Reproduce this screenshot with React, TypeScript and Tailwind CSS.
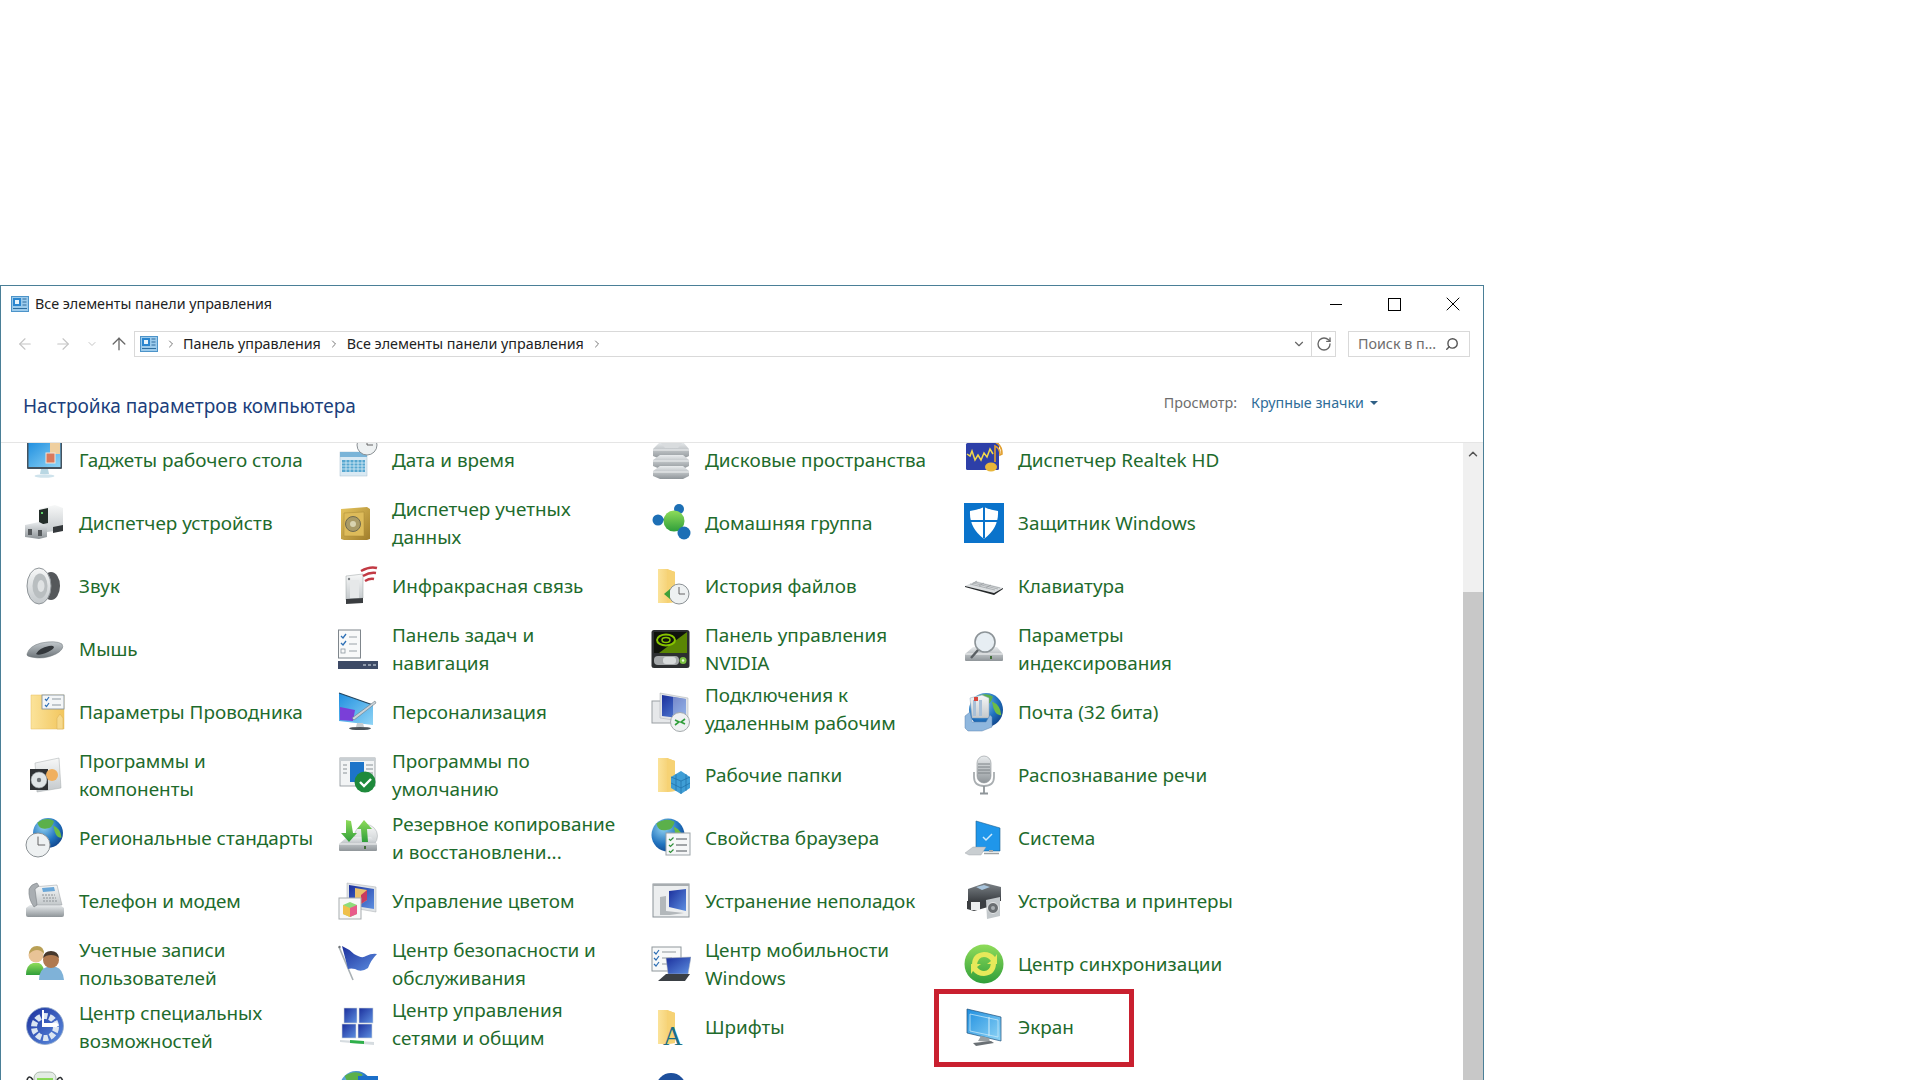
import type { ReactNode } from 'react';
import { ArrowLeft, ArrowRight, ArrowUp, ChevronDown, ChevronRight, ChevronUp, RotateCw, Search, X } from 'lucide-react';

// shared gradients for the control panel icons
function IconDefs() {
  const lin = (id: string, a: string, b: string, x2 = 0, y2 = 1) => (
    <linearGradient id={id} x1="0" y1="0" x2={x2} y2={y2}>
      <stop offset="0" stopColor={a} />
      <stop offset="1" stopColor={b} />
    </linearGradient>
  );
  return (
    <svg className="absolute w-0 h-0">
      <defs>
        {lin('sky', '#1f8fe0', '#8fd4f5', 1, 1)}
        {lin('steel', '#e9ecee', '#8f9599')}
        {lin('light', '#f7f8f8', '#c3c8cb')}
        {lin('folder', '#fbe39a', '#f2c65e', 1, 0)}
        {lin('navy', '#1b2f9c', '#5d8fe0', 1, 1)}
        {lin('green', '#8fdc5a', '#2f9e3a')}
        {lin('gold', '#e6c55e', '#a07d2b', 1, 1)}
        {lin('dark', '#7c8287', '#34383c')}
        {lin('mouse', '#c3c9cd', '#6d7479')}
        <radialGradient id="globe" cx="0.35" cy="0.3" r="0.8">
          <stop offset="0" stopColor="#8fd0f0" />
          <stop offset="0.6" stopColor="#2173bf" />
          <stop offset="1" stopColor="#0f3f86" />
        </radialGradient>
      </defs>
    </svg>
  );
}

function Ico({ children }: { children: ReactNode }) {
  return (
    <svg viewBox="0 0 40 40" className="w-10 h-10 shrink-0">
      {children}
    </svg>
  );
}

const Globe = ({ cx, cy, r }: { cx: number; cy: number; r: number }) => (
  <g>
    <circle cx={cx} cy={cy} r={r} fill="url(#globe)" />
    <path d={`M${cx - r * 0.7} ${cy - r * 0.7}q${r * 0.6} ${-r * 0.4} ${r * 1.1} ${-r * 0.1}q${-r * 0.1} ${r * 0.5} ${-r * 0.5} ${r * 0.5}q${-r * 0.5} ${r * 0.1} ${-r * 0.6} ${-r * 0.4}z`} fill="#5bb04a" />
    <path d={`M${cx + r * 0.35} ${cy - r * 0.5}q${r * 0.5} ${r * 0.2} ${r * 0.55} ${r * 0.8}q${-r * 0.4} ${r * 0.1} ${-r * 0.55} ${-r * 0.8}z`} fill="#6cbc46" />
  </g>
);

const Clock = ({ cx, cy, r }: { cx: number; cy: number; r: number }) => (
  <g>
    <circle cx={cx} cy={cy} r={r} fill="#eef1f2" stroke="#8b9195" strokeWidth="1" />
    <path d={`M${cx} ${cy - r * 0.7}V${cy}H${cx + r * 0.6}`} fill="none" stroke="#555" strokeWidth="0.9" />
  </g>
);

const Folder = () => (
  <g>
    <path d="M7 3h9l8 3v30l-8 1H7z" fill="url(#folder)" />
    <path d="M16 3l8 3v30l-8 1z" fill="#f6d274" />
  </g>
);

const Drive = ({ y = 22 }: { y?: number }) => (
  <g>
    <path d={`M1 ${y + 6}l8-7h24l6 7v6q0 1-1 1H2q-1 0-1-1z`} fill="url(#steel)" />
    <path d={`M1 ${y + 6}h38`} stroke="#f4f5f5" strokeWidth="1" />
    <rect x="26" y={y + 8} width="2" height="3" fill="#3f6d36" />
  </g>
);

const icons: Record<string, ReactNode> = {
  gadgets: (
    <Ico>
      <rect x="2" y="1" width="35" height="28" rx="1" fill="#44525e" />
      <rect x="3.5" y="2" width="32" height="25" fill="url(#sky)" />
      <rect x="25" y="3" width="10" height="11" fill="#efcf9f" />
      <rect x="21" y="13" width="9" height="10" fill="#d9795c" stroke="#f3e6da" />
      <path d="M16 29h7l1 5h-9z" fill="#b9d7e3" />
      <ellipse cx="19.5" cy="36" rx="10" ry="1.8" fill="#cfe3ec" />
    </Ico>
  ),
  devmgr: (
    <Ico>
      <path d="M14 6l16-4 8 3v22l-24 3z" fill="url(#light)" />
      <path d="M14 7l9-2v15l-9 2z" fill="#242e2a" />
      <rect x="16" y="9" width="2" height="2" fill="#5fd06a" />
      <path d="M28 24l10-2v6l-10 2z" fill="#34383b" />
      <path d="M0 22l14-3 8 4v11l-8 2-14-2z" fill="url(#steel)" />
      <rect x="3" y="26" width="4" height="6" fill="#55595c" />
      <rect x="13" y="27" width="4" height="6" fill="#55595c" />
    </Ico>
  ),
  sound: (
    <Ico>
      <ellipse cx="26" cy="20" rx="9" ry="14" fill="#55585b" />
      <ellipse cx="14" cy="20" rx="12" ry="18" fill="url(#light)" stroke="#8f9599" />
      <ellipse cx="15" cy="20" rx="7.5" ry="12.5" fill="#b9bec0" />
      <ellipse cx="16" cy="20" rx="3.5" ry="6" fill="#dfe2e3" />
    </Ico>
  ),
  mouse: (
    <Ico>
      <path d="M2 25q2-8 14-11 15-3 21 1 3 5-6 10-12 6-25 3-5-1-4-3z" fill="url(#mouse)" stroke="#6d7479" strokeWidth="0.5" />
      <path d="M11 25q3-6 13-8 4-1 5 1 0 2-6 5-9 4-12 2z" fill="#33373b" />
    </Ico>
  ),
  explorer: (
    <Ico>
      <path d="M6 3h33v34H6z" fill="url(#folder)" stroke="#e4bd62" strokeWidth="0.5" />
      <path d="M32 26v11h6V26l-3-4z" fill="#f6d98c" stroke="#d6ac55" strokeWidth="0.5" />
      <rect x="17" y="3" width="22" height="14" fill="#f4f6f7" stroke="#7a8a96" strokeWidth="0.8" />
      <path d="M20 7l1.5 1.5L24 5M20 13l1.5 1.5L24 11" fill="none" stroke="#2d6fb5" strokeWidth="1.2" />
      <path d="M27 7h9M27 13h9" stroke="#8d98a0" />
    </Ico>
  ),
  programs: (
    <Ico>
      <path d="M10 8l24-5 2 30-24 4z" fill="url(#light)" stroke="#a5aaad" strokeWidth="0.5" />
      <rect x="5" y="14" width="18" height="21" fill="#2e3134" />
      <circle cx="27" cy="20" r="6" fill="#f0b060" />
      <circle cx="14" cy="25" r="8" fill="#dfe4e6" stroke="#8f9599" strokeWidth="0.6" />
      <circle cx="14" cy="25" r="2.2" fill="#707579" />
    </Ico>
  ),
  regional: (
    <Ico>
      <Globe cx={23} cy={15} r={15} />
      <Clock cx={13} cy={27} r={12} />
    </Ico>
  ),
  phone: (
    <Ico>
      <path d="M1 27l4-3h30l4 3v7q0 2-2 2H3q-2 0-2-2z" fill="url(#steel)" />
      <path d="M8 6l24-2 5 20H10z" fill="url(#light)" stroke="#969b9f" strokeWidth="0.5" />
      <path d="M4 8q2-5 8-6l2 3-4 3 2 16-3 2q-6-8-5-18z" fill="#a9aeb2" stroke="#6f7478" strokeWidth="0.5" />
      <path d="M17 7l12-1 1 4-12 1z" fill="#6aa7d8" />
      <path d="M17 14h13M18 17h13M18 20h14" stroke="#8c9195" strokeWidth="1.2" strokeDasharray="2 1" />
    </Ico>
  ),
  users: (
    <Ico>
      <path d="M1 31q0-10 7-12h6q5 2 6 12z" fill="url(#green)" />
      <circle cx="11" cy="11" r="7.5" fill="#e8c396" />
      <path d="M4 10q1-8 8-8t7 8q-3-4-7-4t-8 4z" fill="#b9a056" />
      <path d="M14 36q0-11 8-13h9q7 2 8 13z" fill="#7fb2d8" />
      <circle cx="26" cy="16" r="8" fill="#b07a50" />
      <path d="M18 14q1-7 8-7t8 7q-3-3-8-3t-8 3z" fill="#47392d" />
    </Ico>
  ),
  access: (
    <Ico>
      <circle cx="20" cy="19" r="18.5" fill="url(#navy)" stroke="#8fa7c8" strokeWidth="0.8" />
      <circle cx="20" cy="20" r="11" fill="none" stroke="#dce6f2" strokeWidth="6" strokeDasharray="5 2" />
      <path d="M19 3v13h12l-3-3 6 5-6 5 3-3H17V3z" fill="#fff" />
    </Ico>
  ),
  power: (
    <Ico>
      <path d="M2 10q2-6 6 0M32 10q4-6 6 2" fill="none" stroke="#2c2f31" strokeWidth="1.6" />
      <rect x="9" y="2" width="22" height="24" rx="6" fill="#e3ebe4" stroke="#8fa090" strokeWidth="0.7" />
      <rect x="12" y="8" width="16" height="18" fill="url(#green)" />
    </Ico>
  ),
  datetime: (
    <Ico>
      <rect x="2" y="12" width="27" height="24" fill="#d9e9f3" stroke="#a9c0cf" strokeWidth="0.5" />
      <rect x="2" y="12" width="27" height="5" fill="#7ab4d8" />
      <path d="M4 20h23v12H4z" fill="#57a7d0" />
      <path d="M8 20v12M12 20v12M16 20v12M20 20v12M24 20v12M4 23h23M4 26h23M4 29h23" stroke="#dbeef7" strokeWidth="0.8" />
      <Clock cx={29} cy={5} r={10} />
    </Ico>
  ),
  cred: (
    <Ico>
      <path d="M3 6l26-2 3 2v30l-3 1H6l-3-1z" fill="url(#gold)" />
      <path d="M6 10l20-1v24H6z" fill="#ddbb5a" stroke="#a88a36" strokeWidth="0.5" />
      <circle cx="15" cy="21" r="7.5" fill="#a89a66" stroke="#6f6a4e" />
      <circle cx="15" cy="21" r="3" fill="#d8d3b0" />
    </Ico>
  ),
  infrared: (
    <Ico>
      <path d="M8 10l17-2v24l-17 2z" fill="url(#light)" stroke="#9ba0a3" strokeWidth="0.5" />
      <rect x="12" y="14" width="9" height="18" fill="#e6e8e9" />
      <circle cx="11" cy="13" r="1.2" fill="#7a7f83" />
      <path d="M8 33l17-1v5l-17 1z" fill="#3a3d40" />
      <path d="M23 5q9-5 16-3M25 10q7-4 13-3M27 15q5-3 9-2" fill="none" stroke="#c23a44" strokeWidth="2.4" />
    </Ico>
  ),
  taskbar: (
    <Ico>
      <rect x="0.5" y="1" width="22" height="28" fill="#f8f9f9" stroke="#7f868c" />
      <path d="M3 7l2 2 3-4M3 14l2 2 3-4" fill="none" stroke="#2d6fb5" strokeWidth="1.3" />
      <rect x="3" y="20" width="4" height="4" fill="none" stroke="#8d98a0" strokeWidth="0.8" />
      <path d="M11 8h8M11 15h8M11 22h8" stroke="#9aa2a8" />
      <rect x="0" y="32" width="40" height="8" fill="#3d4a66" />
      <path d="M25 36h3M30 36h3M35 36h3" stroke="#8f9aab" strokeWidth="2" />
    </Ico>
  ),
  personal: (
    <Ico>
      <path d="M1 1l34 12v20l-34-4z" fill="url(#sky)" />
      <path d="M1 1l34 12" stroke="#22455f" strokeWidth="1.2" />
      <path d="M2 15l15 3-2 11-13-1z" fill="#7a3fd8" />
      <path d="M14 26l23-17 1 2-22 17z" fill="#c9d2d8" stroke="#5f6c76" strokeWidth="0.5" />
      <path d="M19 31h6l1 4h-8z" fill="#c5ccd0" />
      <ellipse cx="22" cy="36.5" rx="11" ry="1.6" fill="#4a5258" />
    </Ico>
  ),
  defaults: (
    <Ico>
      <rect x="2" y="3" width="35" height="28" fill="#f2f4f5" stroke="#8a9297" strokeWidth="0.8" />
      <rect x="2" y="3" width="35" height="3" fill="#c9cfd3" />
      <rect x="12" y="7" width="14" height="20" fill="#1d74c9" />
      <path d="M5 10h4M5 14h4M5 18h4M28 10h7M28 14h7M28 18h7" stroke="#8a9297" />
      <circle cx="27" cy="27" r="10.5" fill="#1f8a3c" />
      <path d="M22 27l4 4 7-7" fill="none" stroke="#fff" strokeWidth="2.4" />
    </Ico>
  ),
  backup: (
    <Ico>
      <circle cx="28" cy="18" r="11.5" fill="url(#light)" stroke="#a5aaad" strokeWidth="0.5" />
      <Drive y={20} />
      <path d="M8 2l5 1 2 12h4l-8 9-8-9h5z" fill="url(#green)" />
      <path d="M24 24l-1-13h-4l7-9 8 9h-5l1 13z" fill="url(#green)" />
    </Ico>
  ),
  color: (
    <Ico>
      <path d="M9 2l29 4v25L9 26z" fill="#dfe3e6" stroke="#a8adb0" strokeWidth="0.5" />
      <path d="M11 4l25 4v20L11 24z" fill="url(#navy)" />
      <path d="M17 7l12 2v10l-6 4-6-6z" fill="#e9c06a" />
      <path d="M29 9v10l-6 4v-9z" fill="#c93b5f" />
      <rect x="1" y="17" width="22" height="21" fill="#f8f8f8" stroke="#a8adb0" />
      <path d="M5 24l7-3 7 3v9l-7 3-7-3z" fill="#8fdc7a" />
      <path d="M5 24l7 3v9l-7-3z" fill="#f0c04a" />
      <path d="M19 24l-7 3v9l7-3z" fill="#e85a8a" />
    </Ico>
  ),
  security: (
    <Ico>
      <path d="M1 3l14 33" stroke="#a9b0b4" strokeWidth="1.6" />
      <circle cx="1.5" cy="3" r="1.2" fill="#707579" />
      <path d="M4 2q7 3 12 8 8 5 12 2 6-3 11-2-6 6-9 14-7 5-13 1-4-1-7 0z" fill="url(#navy)" />
    </Ico>
  ),
  network: (
    <Ico>
      <rect x="6" y="1" width="13" height="15" fill="url(#navy)" stroke="#d0d6db" strokeWidth="0.6" />
      <rect x="21" y="1" width="14" height="15" fill="url(#navy)" stroke="#d0d6db" strokeWidth="0.6" />
      <rect x="4" y="17" width="14" height="14" fill="url(#navy)" stroke="#d0d6db" strokeWidth="0.6" />
      <rect x="20" y="17" width="14" height="14" fill="url(#navy)" stroke="#d0d6db" strokeWidth="0.6" />
      <path d="M2 33l34 2v3L2 35z" fill="#d6dce0" />
      <path d="M12 33l14 1v3l-14-1z" fill="#2fb04a" />
    </Ico>
  ),
  language: (
    <Ico>
      <Globe cx={18} cy={17} r={16} />
      <rect x="20" y="6" width="20" height="20" fill="#1c6fc9" />
    </Ico>
  ),
  storage: (
    <Ico>
      <path d="M2 9l7-7h23l6 7v7l-6 3H9l-7-3z" fill="url(#steel)" />
      <path d="M2 20l7-5h23l6 5v6l-6 3H9l-7-3z" fill="url(#steel)" />
      <path d="M2 31l7-5h23l6 5v5l-6 3H9l-7-3z" fill="url(#steel)" />
      <path d="M2 10h36M2 21h36M2 32h36" stroke="#f1f3f4" />
      <path d="M9 2h23l-5 6H14z" fill="#d9dcde" />
    </Ico>
  ),
  homegroup: (
    <Ico>
      <circle cx="7" cy="17" r="5.5" fill="#1d6fb5" />
      <circle cx="28" cy="6" r="5" fill="#1d6fb5" />
      <path d="M11 17l12-3" stroke="#1d6fb5" strokeWidth="2" />
      <circle cx="23" cy="18" r="10.5" fill="url(#green)" />
      <circle cx="33" cy="30" r="6.5" fill="#1d6fb5" />
    </Ico>
  ),
  history: (
    <Ico>
      <Folder />
      <path d="M24 24l-8 6 8 5z" fill="#3f9e38" />
      <Clock cx={28} cy={28} r={10} />
      <path d="M13 28l6-5v10z" fill="#3fa03a" />
    </Ico>
  ),
  nvidia: (
    <Ico>
      <rect x="0.5" y="1" width="38" height="38" rx="2.5" fill="#2d2f31" />
      <rect x="3" y="3" width="33" height="21" fill="#0f120c" />
      <path d="M36 3v21H8z" fill="#7ab800" opacity="0.7" />
      <ellipse cx="15" cy="11" rx="9" ry="5.5" fill="none" stroke="#86c400" strokeWidth="2" />
      <ellipse cx="15" cy="11" rx="4" ry="2.5" fill="none" stroke="#86c400" strokeWidth="1.5" />
      <rect x="3" y="27" width="25" height="9" rx="4" fill="#a5a8aa" />
      <rect x="12" y="28" width="13" height="7" rx="3" fill="#d8dbdc" />
      <circle cx="32" cy="31.5" r="3.5" fill="#7dc242" />
      <circle cx="32" cy="31.5" r="1.2" fill="#e8f7d8" />
    </Ico>
  ),
  rdp: (
    <Ico>
      <rect x="1" y="9" width="20" height="22" fill="#e6e8ea" stroke="#9a9fa3" />
      <path d="M9 1l28 5v24L9 26z" fill="#e2e5e7" stroke="#a8adb0" strokeWidth="0.5" />
      <path d="M11 3l24 4v20L11 24z" fill="url(#navy)" />
      <path d="M22 5l13 2v20l-13-3z" fill="#fff" opacity="0.35" />
      <circle cx="29" cy="30" r="9.5" fill="#eef1f2" stroke="#a5aaad" />
      <path d="M24 33l4-3-4-2M34 27l-4 3 4 2" fill="none" stroke="#2f9e3a" strokeWidth="1.6" />
    </Ico>
  ),
  work: (
    <Ico>
      <Folder />
      <path d="M20 22l10-6 9 6v11l-9 6-10-6z" fill="#3f9ed6" />
      <path d="M30 26v13M20 22l10 4 9-4M20 28l10 5 9-5M25 19v17M35 19v17" fill="none" stroke="#1c6fa8" strokeWidth="0.7" />
    </Ico>
  ),
  browser: (
    <Ico>
      <Globe cx={17} cy={17} r={16.5} />
      <rect x="15" y="15" width="24" height="22" fill="#f6f7f8" stroke="#9ca3a8" />
      <path d="M18 21l1.5 1.5 3-3M18 27l1.5 1.5 3-3M18 33l1.5 1.5 3-3" fill="none" stroke="#2f8f3a" strokeWidth="1.2" />
      <path d="M25 21h11M25 27h11M25 33h11" stroke="#4d5358" />
    </Ico>
  ),
  trouble: (
    <Ico>
      <rect x="2" y="3" width="36" height="33" fill="#eceeef" stroke="#8a9297" />
      <rect x="2" y="3" width="36" height="2" fill="#a8adb0" />
      <path d="M18 10l17-2v22l-17-4z" fill="url(#navy)" />
      <path d="M9 16l6-1v15l18 2-14 2H9z" fill="#b3b8bb" />
    </Ico>
  ),
  mobility: (
    <Ico>
      <rect x="1" y="3" width="29" height="24" fill="#f8f9f9" stroke="#8f979c" />
      <path d="M3 8l2 2 3-4M3 14l2 2 3-4M3 20l2 2 3-4" fill="none" stroke="#2d6fb5" strokeWidth="1.2" />
      <path d="M11 8h14M11 14h10M11 20h8" stroke="#8f979c" />
      <path d="M15 14l25-1-3 17H17z" fill="url(#navy)" stroke="#b0b6ba" strokeWidth="0.5" />
      <path d="M7 37l8-7h24l-5 7z" fill="#3a3f44" />
    </Ico>
  ),
  fonts: (
    <Ico>
      <Folder />
      <text x="12" y="38" fontFamily="Liberation Serif, serif" fontSize="27" fill="#1c6f86">A</text>
    </Ico>
  ),
  round: (
    <Ico>
      <circle cx="20" cy="18" r="15" fill="#1d4f9c" />
    </Ico>
  ),
  realtek: (
    <Ico>
      <rect x="2" y="3" width="33" height="27" rx="1.5" fill="#2d3fa8" />
      <path d="M3 14l3 2 2-5 3 9 3-5 3 5 3-7 3 4 3-8 3 5" fill="none" stroke="#f2d84a" strokeWidth="1.5" />
      <path d="M31 2q7 3 7 12l-2 1q0-7-5-9v16" fill="none" stroke="#e2a030" strokeWidth="1.6" />
      <ellipse cx="27" cy="27" rx="6" ry="4.5" fill="#e8b63a" />
    </Ico>
  ),
  defender: (
    <Ico>
      <rect width="40" height="40" fill="#0a73cb" />
      <path d="M6 8q8-1 14-4 6 3 14 4 1 17-14 28Q5 25 6 8z" fill="#fff" />
      <path d="M19 4h2v31l-1 1-1-1zM6 17h28v2H6z" fill="#0a73cb" />
    </Ico>
  ),
  keyboard: (
    <Ico>
      <path d="M1 20l11-5 27 7-9 5z" fill="#dcdfe1" />
      <path d="M1 20l29 7 9-5v1l-9 6L1 21z" fill="#25282a" />
      <path d="M11 16l25 6M9 17l25 6M6 18l25 6M13 15l-5 3M20 17l-5 3M27 19l-5 3" stroke="#8d9295" strokeWidth="0.6" />
    </Ico>
  ),
  indexing: (
    <Ico>
      <Drive y={19} />
      <circle cx="21" cy="13" r="10" fill="#e7eef3" stroke="#8d9498" strokeWidth="1.6" />
      <path d="M14 21l-7 8" stroke="#5a5f63" strokeWidth="2.4" />
    </Ico>
  ),
  mail: (
    <Ico>
      <Globe cx={22} cy={18} r={17} />
      <path d="M6 6l12-3 7 3v20H8z" fill="url(#light)" stroke="#8fa6bc" strokeWidth="0.5" />
      <path d="M9 8h3v16H9zM15 8h3v16h-3z" fill="#a8c0d8" />
      <rect x="10" y="5" width="4" height="4" fill="#d8453c" />
      <path d="M1 24l5-4 2 10h14l4-7 2 2v10l-10 4H4l-3-3z" fill="#8fb7de" stroke="#5f86b0" strokeWidth="0.5" />
    </Ico>
  ),
  speech: (
    <Ico>
      <rect x="13" y="1" width="14" height="27" rx="7" fill="url(#steel)" stroke="#8f9599" strokeWidth="0.6" />
      <path d="M14 9h12M14 12h12M14 15h12M14 18h12" stroke="#7d8286" />
      <path d="M10 17v5q0 9 10 9t10-9v-5" fill="none" stroke="#a9aeb1" strokeWidth="1.8" />
      <path d="M20 31v7M16 38.5h8" stroke="#8f9599" strokeWidth="1.8" />
    </Ico>
  ),
  system: (
    <Ico>
      <path d="M12 3l24 7v23H12z" fill="#1f96ea" stroke="#1c5f8e" strokeWidth="0.6" />
      <path d="M19 19l3 3 6-6" fill="none" stroke="#cfeafc" strokeWidth="1.5" />
      <path d="M25 32h4v2h-4z" fill="#a5aaad" />
      <path d="M1 35l8-6h13l-5 8H5z" fill="#c9ced1" stroke="#9ba0a3" strokeWidth="0.4" />
      <path d="M20 35.5h15" stroke="#9ba0a3" strokeWidth="1.5" />
    </Ico>
  ),
  devices: (
    <Ico>
      <path d="M4 8l17-6 16 4v14l-33 2z" fill="url(#dark)" />
      <path d="M12 6l8-2 6 2-8 3z" fill="#a8c4dc" />
      <path d="M3 20h21v6l-14 4-7-2z" fill="#3c3f42" />
      <rect x="7" y="21" width="9" height="8" fill="#eceeef" />
      <path d="M22 19l14-3v19l-13 3z" fill="#c3c8cb" />
      <circle cx="29" cy="27" r="5.5" fill="#6a6e71" stroke="#e6e8e9" />
      <circle cx="29" cy="27" r="2" fill="#a9aeb1" />
    </Ico>
  ),
  sync: (
    <Ico>
      <circle cx="20" cy="20" r="19.5" fill="url(#green)" />
      <path d="M8 21q0-12 12-13 7 0 11 5l2-3v10H23l4-3q-3-4-7-4-6 0-7 8z" fill="#e6e95a" />
      <path d="M32 19q0 12-12 13-7 0-11-5l-2 3V20h10l-4 3q3 4 7 4 6 0 7-8z" fill="#e6e95a" />
    </Ico>
  ),
  display: (
    <Ico>
      <path d="M3 2l34 8v24L3 26z" fill="url(#sky)" stroke="#1c4f7a" strokeWidth="0.7" />
      <path d="M6 7l28 6v17L6 24z" fill="none" stroke="#c3e6f8" strokeWidth="0.8" />
      <path d="M25 10v19" stroke="#d5eefa" />
      <path d="M17 29l8 2 1 4-12-1z" fill="#9aa0a3" />
      <path d="M9 36l18-2 3 2-18 3z" fill="#6a7074" />
    </Ico>
  ),
};

type Item = { icon: string; lines: string[]; high?: boolean };

const items: Item[] = [
  { icon: 'gadgets', lines: ['Гаджеты рабочего стола'] },
  { icon: 'datetime', lines: ['Дата и время'] },
  { icon: 'storage', lines: ['Дисковые пространства'] },
  { icon: 'realtek', lines: ['Диспетчер Realtek HD'] },
  { icon: 'devmgr', lines: ['Диспетчер устройств'] },
  { icon: 'cred', lines: ['Диспетчер учетных', 'данных'] },
  { icon: 'homegroup', lines: ['Домашняя группа'] },
  { icon: 'defender', lines: ['Защитник Windows'] },
  { icon: 'sound', lines: ['Звук'] },
  { icon: 'infrared', lines: ['Инфракрасная связь'] },
  { icon: 'history', lines: ['История файлов'] },
  { icon: 'keyboard', lines: ['Клавиатура'] },
  { icon: 'mouse', lines: ['Мышь'] },
  { icon: 'taskbar', lines: ['Панель задач и', 'навигация'] },
  { icon: 'nvidia', lines: ['Панель управления', 'NVIDIA'] },
  { icon: 'indexing', lines: ['Параметры', 'индексирования'] },
  { icon: 'explorer', lines: ['Параметры Проводника'] },
  { icon: 'personal', lines: ['Персонализация'] },
  { icon: 'rdp', lines: ['Подключения к', 'удаленным рабочим'], high: true },
  { icon: 'mail', lines: ['Почта (32 бита)'] },
  { icon: 'programs', lines: ['Программы и', 'компоненты'] },
  { icon: 'defaults', lines: ['Программы по', 'умолчанию'] },
  { icon: 'work', lines: ['Рабочие папки'] },
  { icon: 'speech', lines: ['Распознавание речи'] },
  { icon: 'regional', lines: ['Региональные стандарты'] },
  { icon: 'backup', lines: ['Резервное копирование', 'и восстановлени...'] },
  { icon: 'browser', lines: ['Свойства браузера'] },
  { icon: 'system', lines: ['Система'] },
  { icon: 'phone', lines: ['Телефон и модем'] },
  { icon: 'color', lines: ['Управление цветом'] },
  { icon: 'trouble', lines: ['Устранение неполадок'] },
  { icon: 'devices', lines: ['Устройства и принтеры'] },
  { icon: 'users', lines: ['Учетные записи', 'пользователей'] },
  { icon: 'security', lines: ['Центр безопасности и', 'обслуживания'] },
  { icon: 'mobility', lines: ['Центр мобильности', 'Windows'] },
  { icon: 'sync', lines: ['Центр синхронизации'] },
  { icon: 'access', lines: ['Центр специальных', 'возможностей'] },
  { icon: 'network', lines: ['Центр управления', 'сетями и общим'], high: true },
  { icon: 'fonts', lines: ['Шрифты'] },
  { icon: 'display', lines: ['Экран'] },
  { icon: 'power', lines: [] },
  { icon: 'language', lines: [] },
  { icon: 'round', lines: [] },
];

function CpIcon() {
  return (
    <svg viewBox="0 0 18 16" className="w-[18px] h-4 shrink-0">
      <rect x="0.5" y="0.5" width="17" height="15" fill="#9ccbec" stroke="#4d94c9" />
      <rect x="2" y="2" width="8" height="8" fill="#2b86cf" />
      <rect x="4" y="4" width="4" height="4" fill="#e8f4fb" />
      <path d="M11.5 3h4M11.5 6h4M11.5 9h4M2 12.5h14" stroke="#2e6d9e" strokeWidth="1.2" />
    </svg>
  );
}

export default function App() {
  return (
    <div className="h-screen overflow-hidden bg-white pt-[285px] font-['Noto_Sans',sans-serif]">
      <IconDefs />
      <div className="w-[1484px] h-[795px] border border-b-0 border-[#4a7f97] flex flex-col bg-white">
        {/* Title bar */}
        <div className="h-[36px] flex items-center pl-[10px] shrink-0">
          <CpIcon />
          <span className="ml-[6px] text-[14.3px] text-[#222]">Все элементы панели управления</span>
          <div className="ml-auto flex items-center">
            <div className="w-[12px] h-px bg-black" />
            <div className="w-[13px] h-[13px] ml-[46px] border border-black" />
            <X className="w-[24px] h-[24px] ml-[40px] mr-[18px] text-black" strokeWidth={1} />
          </div>
        </div>

        {/* Address bar */}
        <div className="mt-[9px] h-[26px] flex items-center shrink-0">
          <ArrowLeft className="w-[18px] h-[18px] ml-[15px] text-[#c4c4c4]" strokeWidth={1.5} />
          <ArrowRight className="w-[18px] h-[18px] ml-[20px] text-[#c4c4c4]" strokeWidth={1.5} />
          <ChevronDown className="w-3 h-3 ml-[14px] text-[#c4c4c4]" />
          <ArrowUp className="w-[20px] h-[20px] ml-[11px] text-[#6a6a6a]" strokeWidth={1.6} />
          <div className="ml-[5px] w-[1202px] h-[26px] border border-[#d9d9d9] flex items-center pl-[5px]">
            <CpIcon />
            <ChevronRight className="w-3 h-3 ml-[7px] text-[#777]" />
            <span className="ml-[6px] text-[14.3px] text-[#222]">Панель управления</span>
            <ChevronRight className="w-3 h-3 ml-[7px] text-[#777]" />
            <span className="ml-[7px] text-[14.3px] text-[#222]">Все элементы панели управления</span>
            <ChevronRight className="w-3 h-3 ml-[7px] text-[#777]" />
            <ChevronDown className="ml-auto mr-[5px] w-[14px] h-[14px] text-[#666]" />
            <div className="w-[24px] h-full border-l border-[#d9d9d9] flex items-center justify-center">
              <RotateCw className="w-[16px] h-[16px] text-[#666]" />
            </div>
          </div>
          <div className="ml-[12px] w-[122px] h-[26px] border border-[#d9d9d9] flex items-center pl-[9px] pr-[10px] text-[#6d6d6d]">
            <span className="text-[14.3px]">Поиск в п...</span>
            <Search className="ml-auto w-[14px] h-[14px] -scale-x-100 text-[#555]" strokeWidth={2.4} />
          </div>
        </div>

        {/* Heading row */}
        <div className="h-[85px] shrink-0 flex items-center justify-between pl-[22px] pr-[105px] pt-[13px]">
          <h1 className="text-[19px] text-[#1c3f7c] font-normal">Настройка параметров компьютера</h1>
          <div className="flex items-center text-[14.3px] -mt-[6px]">
            <span className="text-[#6d6d6d]">Просмотр:</span>
            <span className="ml-[14px] text-[#2f6d99]">Крупные значки</span>
            <span className="ml-[6px] w-0 h-0 border-x-[4px] border-x-transparent border-t-[4px] border-t-[#2f5f85]" />
          </div>
        </div>

        {/* Items and scrollbar */}
        <div className="flex-1 min-h-0 flex border-t border-[#e5e5e5]">
          <div className="flex-1 min-w-0 overflow-hidden">
            <div className="grid grid-cols-[repeat(4,313px)] auto-rows-[63px] -mt-[15px]">
              {items.map((item) => (
                <div key={item.icon} className="relative flex items-center gap-[14px] pl-[24px]">
                  {icons[item.icon]}
                  <div className={item.high ? "-mt-[5px] text-[18.9px] leading-[28px] text-[#1e6b2c] whitespace-nowrap" : "text-[18.9px] leading-[28px] text-[#1e6b2c] whitespace-nowrap"}>
                    {item.lines.map((line) => (
                      <div key={line}>{line}</div>
                    ))}
                  </div>
                  {item.icon === 'display' && (
                    <div className="absolute -left-[6px] -top-[6px] w-[200px] h-[78px] border-[5px] border-[#c9202f]" />
                  )}
                </div>
              ))}
            </div>
          </div>
          <div className="w-[20px] shrink-0 bg-[#f0f0f0] flex flex-col">
            <div className="h-[22px] flex items-center justify-center">
              <ChevronUp className="w-[14px] h-[14px] text-[#555]" strokeWidth={2.5} />
            </div>
            <div className="h-[127px]" />
            <div className="flex-1 bg-[#c8c8c8]" />
          </div>
        </div>
      </div>
    </div>
  );
}
